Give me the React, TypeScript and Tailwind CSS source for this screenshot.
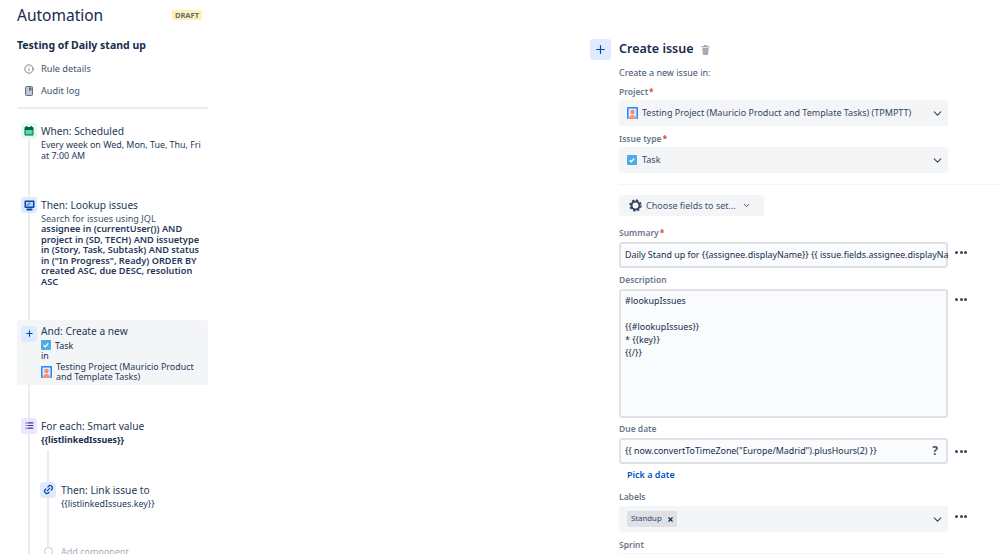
import React from "react";
import { ChevronDown, Info, Plus, X, Link2, List } from "lucide-react";

function ProjectAvatar() {
  return (
    <svg width="11" height="12" viewBox="0 0 11 12" className="shrink-0">
      <rect width="11" height="12" rx="1" fill="#2684ff" />
      <rect x="1.5" y="1.5" width="8" height="10" fill="#deebff" />
      <circle cx="5.5" cy="5" r="2.2" fill="#f58b7c" />
      <path d="M2 12c0-3 1.5-4 3.5-4s3.5 1 3.5 4z" fill="#ff8f73" />
    </svg>
  );
}

function TaskIcon() {
  return (
    <svg width="10" height="10" viewBox="0 0 10 10" className="shrink-0">
      <rect width="10" height="10" rx="1" fill="#4bade8" />
      <path d="M2.6 5.2l1.7 1.6 3-3.4" fill="none" stroke="#fff" strokeWidth="1.3" />
    </svg>
  );
}

function CalendarIcon() {
  return (
    <svg width="10" height="10" viewBox="0 0 10 10">
      <rect x="0.5" y="1" width="9" height="8.5" rx="1" fill="#006644" />
      <rect x="2" y="0" width="1.4" height="2" fill="#006644" />
      <rect x="6.6" y="0" width="1.4" height="2" fill="#006644" />
      <rect x="1.5" y="4" width="7" height="4.5" fill="#57d9a3" />
    </svg>
  );
}

function LookupIcon() {
  return (
    <svg width="11" height="11" viewBox="0 0 11 11">
      <rect x="0.5" y="0.5" width="10" height="7.5" rx="1" fill="#0747a6" />
      <rect x="2" y="2" width="7" height="4.5" fill="#b3d4ff" />
      <path d="M3 5.5l3-2.5" stroke="#0747a6" strokeWidth="1" />
      <rect x="2.5" y="8.5" width="6" height="2" rx="0.5" fill="#0747a6" />
    </svg>
  );
}

function AuditIcon() {
  return (
    <svg width="8" height="10" viewBox="0 0 8 10" className="mr-[8px] ml-[1px]">
      <rect x="0.5" y="0.5" width="7" height="9" rx="1" fill="#c1c7d0" stroke="#5e6c84" strokeWidth="1" />
      <rect x="4" y="1.5" width="2.5" height="3" fill="#5e6c84" />
    </svg>
  );
}

function TrashIcon() {
  return (
    <svg width="9" height="10" viewBox="0 0 9 10" className="shrink-0">
      <rect x="0.5" y="1" width="8" height="1.4" fill="#a5adba" />
      <rect x="3" y="0" width="3" height="1.2" fill="#a5adba" />
      <path d="M1.3 3h6.4l-.6 7H1.9z" fill="#a5adba" />
    </svg>
  );
}

function GearIcon() {
  return (
    <svg width="13" height="13" viewBox="0 0 13 13" className="shrink-0">
      <circle cx="6.5" cy="6.5" r="4" fill="none" stroke="#344563" strokeWidth="2" />
      <circle cx="6.5" cy="6.5" r="5.4" fill="none" stroke="#344563" strokeWidth="1.6" strokeDasharray="2.2 2.04" />
    </svg>
  );
}

function Dots({ className = "" }: { className?: string }) {
  return (
    <div className={`w-[12px] ml-[7px] flex gap-[1.5px] shrink-0 ${className}`}>
      <span className="w-[3px] h-[3px] rounded-full bg-[#344563]" />
      <span className="w-[3px] h-[3px] rounded-full bg-[#344563]" />
      <span className="w-[3px] h-[3px] rounded-full bg-[#344563]" />
    </div>
  );
}

function Label({ text, required, className }: { text: string; required?: boolean; className: string }) {
  return (
    <div className={`text-[8.5px] leading-[12px] font-semibold text-[#6b778c] ${className}`}>
      {text}
      {required && <span className="text-[#de350b] ml-[1px]">*</span>}
    </div>
  );
}

function Select({ children }: { children: React.ReactNode }) {
  return (
    <div className="w-[329px] h-[26px] bg-[#f4f5f7] rounded-[3px] flex items-center pl-[8px] pr-[4px] shrink-0">
      <div className="flex-1 flex items-center gap-[4px] min-w-0">{children}</div>
      <ChevronDown size={13} strokeWidth={2} className="text-[#344563]" />
    </div>
  );
}

function Step({
  icon,
  tint,
  line = true,
  pb,
  children,
}: {
  icon: React.ReactNode;
  tint: string;
  line?: boolean;
  pb: string;
  children: React.ReactNode;
}) {
  return (
    <div className="flex">
      <div className="w-[24px] pl-[4px] flex flex-col shrink-0">
        <div className={`w-[16px] h-[16px] rounded-[3px] flex items-center justify-center ${tint}`}>{icon}</div>
        {line && <div className="w-[2px] flex-1 bg-[#ebecf0] ml-[7px]" />}
      </div>
      <div className={`flex-1 min-w-0 ${pb}`}>{children}</div>
    </div>
  );
}

export default function App() {
  return (
    <div
      className="w-[999px] h-[554px] overflow-hidden bg-white flex text-[#172b4d]"
      style={{ fontFamily: '"Noto Sans", sans-serif' }}
    >
      {/* left rail */}
      <div className="w-[191px] ml-[17px] shrink-0">
        <div className="flex items-center justify-between h-[20px] mt-[5px] pr-[6px]">
          <span className="text-[15.5px] leading-[20px] text-[#172b4d]">Automation</span>
          <span className="bg-[#fff0b3] rounded-[2px] px-[3px] text-[7.5px] leading-[10px] font-bold text-[#5e6c84]">DRAFT</span>
        </div>
        <div className="mt-[13px] text-[10.5px] leading-[14px] font-bold">Testing of Daily stand up</div>
        <div className="mt-[11px] flex items-center pl-[7px] h-[12px] text-[9.2px] text-[#42526e]">
          <Info size={10} className="mr-[7px] text-[#5e6c84]" />
          Rule details
        </div>
        <div className="mt-[10px] flex items-center pl-[7px] h-[12px] text-[9.2px] text-[#42526e]">
          <AuditIcon />
          Audit log
        </div>
        <div className="h-[2px] bg-[#ebecf0] mt-[10px]" />

        <div className="mt-[14px]">
          <Step pb="pb-[36px]" tint="bg-[#e3fcef]" icon={<CalendarIcon />}>
            <div className="text-[10.2px] leading-[16px] text-[#253858]">When: Scheduled</div>
            <div className="text-[8.9px] leading-[11px] text-[#253858]">Every week on Wed, Mon, Tue, Thu, Fri at 7:00 AM</div>
          </Step>
          <Step pb="pb-[32px]" tint="bg-[#deebff]" icon={<LookupIcon />}>
            <div className="text-[10.2px] leading-[16px] text-[#253858]">Then: Lookup issues</div>
            <div className="text-[9.1px] leading-[11px] text-[#42526e]">Search for issues using JQL</div>
            <div className="text-[9.2px] leading-[10.6px] font-semibold text-[#253858]">
              assignee in (currentUser()) AND project in (SD, TECH) AND issuetype in (Story, Task, Subtask) AND status in ("In Progress", Ready) ORDER BY created ASC, due DESC, resolution ASC
            </div>
          </Step>
          <div className="bg-[#f4f5f7] rounded-[3px] h-[65px] pt-[6px]">
            <Step tint="bg-[#deebff]" pb="" line={false} icon={<Plus size={9} strokeWidth={3} className="text-[#0747a6]" />}>
              <div className="text-[10.2px] leading-[12px] text-[#253858] mt-[-1px]">And: Create a new</div>
              <div className="flex items-center gap-[4px] text-[8.9px] leading-[11px] mt-[3px]">
                <TaskIcon />
                <span>Task</span>
              </div>
              <div className="text-[8.9px] leading-[10px]">in</div>
              <div className="flex items-center gap-[4px] text-[8.9px] leading-[10.5px] mt-[1px] text-[#253858]">
                <ProjectAvatar />
                <span>Testing Project (Mauricio Product and Template Tasks)</span>
              </div>
            </Step>
          </div>
          <div className="w-[2px] h-[33px] bg-[#ebecf0] ml-[11px]" />
          <Step pb="" tint="bg-[#eae6ff]" icon={<List size={9} strokeWidth={3} className="text-[#403294]" />}>
            <div className="text-[10.2px] leading-[16px] text-[#253858]">For each: Smart value</div>
            <div className="text-[8.9px] leading-[11px] font-bold">{"{{listlinkedIssues}}"}</div>
            <div className="flex mt-[5px] ml-[-1px]">
              <div className="flex flex-col items-center shrink-0 w-[16px] mr-[5px]">
                <div className="w-[2px] h-[32px] bg-[#ebecf0]" />
                <div className="w-[16px] h-[16px] rounded-[3px] bg-[#deebff] flex items-center justify-center shrink-0">
                  <Link2 size={11} strokeWidth={2.5} className="text-[#0747a6] -rotate-45" />
                </div>
                <div className="w-[2px] h-[49px] bg-[#ebecf0] shrink-0" />
                <div className="w-[9px] h-[9px] rounded-full border border-[#c1c7d0] bg-white shrink-0" />
              </div>
              <div className="pt-[32px]">
                <div className="text-[10.2px] leading-[16px] text-[#253858]">Then: Link issue to</div>
                <div className="text-[8.9px] leading-[11px] text-[#253858]">{"{{listlinkedIssues.key}}"}</div>
                <div className="text-[9px] leading-[12px] text-[#a5adba] mt-[37px]">Add component</div>
              </div>
            </div>
          </Step>
        </div>
      </div>

      {/* right panel */}
      <div className="ml-[382px] flex-1 min-w-0 pt-[39px] flex">
        <div className="w-[21px] h-[21px] rounded-[3px] bg-[#deebff] flex items-center justify-center shrink-0">
          <Plus size={13} strokeWidth={2.2} className="text-[#0747a6]" />
        </div>
        <div className="ml-[8px] flex-1 min-w-0">
          <div className="flex items-center h-[21px] gap-[7px]">
            <span className="text-[12.5px] font-semibold text-[#172b4d]">Create issue</span>
            <TrashIcon />
          </div>
          <div className="mt-[7px] text-[9px] leading-[12px] text-[#42526e]">Create a new issue in:</div>
          <Label text="Project" required className="mt-[7px]" />
          <div className="mt-[2px]">
            <Select>
              <ProjectAvatar />
              <span className="text-[9px] text-[#344563]">Testing Project (Mauricio Product and Template Tasks) (TPMPTT)</span>
            </Select>
          </div>
          <Label text="Issue type" required className="mt-[7px]" />
          <div className="mt-[2px]">
            <Select>
              <TaskIcon />
              <span className="text-[9px] text-[#344563] ml-[1px]">Task</span>
            </Select>
          </div>
          <div className="h-[1px] bg-[#f4f5f7] mt-[11px]" />
          <div className="mt-[10px] w-[145px] h-[21px] bg-[#f4f5f7] rounded-[3px] flex items-center pl-[10px] gap-[4px] text-[9px] text-[#42526e]">
            <GearIcon />
            <span>Choose fields to set...</span>
            <ChevronDown size={9} strokeWidth={2.5} className="ml-[2px]" />
          </div>

          <Label text="Summary" required className="mt-[11px]" />
          <div className="flex items-center mt-[3px]">
            <div className="w-[329px] h-[26px] bg-[#fafbfc] border-2 border-[#dfe1e6] rounded-[3px] flex items-center pl-[4px] text-[8.9px] text-[#172b4d] whitespace-nowrap shrink-0">
              {"Daily Stand up for {{assignee.displayName}} {{ issue.fields.assignee.displayNa"}
            </div>
            <Dots className="mt-[-6px]" />
          </div>
          <Label text="Description" className="mt-[6px]" />
          <div className="flex items-start mt-[3px]">
            <div className="w-[329px] h-[129px] bg-[#fafbfc] border-2 border-[#dfe1e6] rounded-[3px] pl-[4px] pt-[3px] text-[8.9px] leading-[13px] text-[#172b4d] shrink-0">
              <div>#lookupIssues</div>
              <div className="h-[13px]" />
              <div>{"{{#lookupIssues}}"}</div>
              <div>{"* {{key}}"}</div>
              <div>{"{{/}}"}</div>
            </div>
            <Dots className="mt-[9px]" />
          </div>
          <Label text="Due date" className="mt-[5px]" />
          <div className="flex items-center mt-[3px]">
            <div className="w-[329px] h-[26px] bg-[#fafbfc] border-2 border-[#dfe1e6] rounded-[3px] flex items-center pl-[4px] pr-[8px] text-[8.9px] text-[#172b4d] shrink-0">
              <span className="flex-1">{'{{ now.convertToTimeZone("Europe/Madrid").plusHours(2) }}'}</span>
              <span className="text-[12px] font-bold text-[#42526e]">?</span>
            </div>
            <Dots className="mt-[1px]" />
          </div>
          <div className="mt-[4px] ml-[8px] text-[9px] leading-[13px] font-semibold text-[#0052cc]">Pick a date</div>
          <Label text="Labels" className="mt-[10px]" />
          <div className="flex items-center mt-[3px]">
            <Select>
              <div className="bg-[#dfe1e6] rounded-[2px] h-[16px] flex items-center pl-[4px] pr-[3px] gap-[5px] text-[7.8px] text-[#344563]">
                Standup
                <X size={7} strokeWidth={4} className="text-[#172b4d]" />
              </div>
            </Select>
            <Dots className="mt-[-6px]" />
          </div>
          <Label text="Sprint" className="mt-[7px]" />
          <div className="mt-[2px] h-[20px] w-[329px] bg-[#f4f5f7] rounded-t-[3px]" />
        </div>
      </div>
    </div>
  );
}
